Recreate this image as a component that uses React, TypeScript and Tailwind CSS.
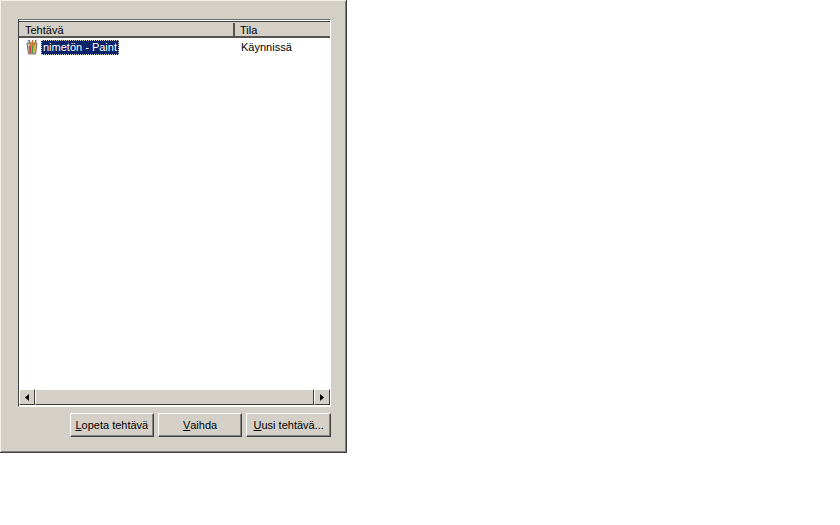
import React from "react";

const raised =
  "border border-t-white border-l-white border-r-[#404040] border-b-[#404040] bg-[#d4d0c8]";

function PaintIcon() {
  return (
    <svg width="16" height="16" viewBox="0 0 16 16" className="shrink-0">
      <path d="M3 4h10l-1.5 11h-7z" fill="#c8c4bc" stroke="#6e6a62" strokeWidth="1" />
      <path d="M5 7h2l.5 7H5.5z" fill="#d8413a" />
      <path d="M7.5 7h2l-.3 7H7.8z" fill="#3f9a45" />
      <path d="M9.8 7h1.7l-1 7H9.6z" fill="#e0b030" />
      <path d="M5 1l2 6M8.5 1v6M12 1l-2 6" stroke="#b5762e" strokeWidth="1.4" />
      <path d="M4 1l1.5 2M11 2l1.5-1" stroke="#4262b0" strokeWidth="1" />
    </svg>
  );
}

function ArrowButton({ dir }: { dir: "left" | "right" }) {
  return (
    <div className={`w-4 h-4 shrink-0 flex items-center justify-center ${raised}`}>
      <svg width="4" height="7" viewBox="0 0 4 7">
        <path d={dir === "left" ? "M4 0v7L0 3.5z" : "M0 0v7l4-3.5z"} fill="#000" />
      </svg>
    </div>
  );
}

function DialogButton({ hotkey, rest, width }: { hotkey: string; rest: string; width: string }) {
  return (
    <button
      className={`h-6 ${width} flex items-center justify-center text-[11px] text-black border border-t-white border-l-white border-r-[#404040] border-b-[#404040] bg-[#d4d0c8] shadow-[inset_-1px_-1px_0_#808080]`}
    >
      <span className="underline">{hotkey}</span>
      {rest}
    </button>
  );
}

export default function App() {
  return (
    <div className="w-[840px] h-[525px] bg-white font-['Liberation_Sans',sans-serif] text-[11px] text-black overflow-hidden">
      <div className="w-[347px] h-[453px] bg-[#d4d0c8] border-r border-b border-r-[#404040] border-b-[#404040] shadow-[inset_1px_1px_0_#f2f0ea,inset_-1px_-1px_0_#808080] pt-[19px] pl-[18px] pr-[15px] flex flex-col">
        {/* Task list */}
        <div className="h-[388px] w-[313px] flex flex-col border border-t-[#707070] border-l-[#404040] border-r-white border-b-white bg-white">
          <div className="h-[17px] mt-px flex shrink-0 bg-[#d4d0c8] border-t border-t-[#404040] border-b-2 border-b-[#55534e] leading-[15px] pt-px">
            <div className="w-[216px] pl-[6px] border-r-2 border-r-[#55534e]">Tehtävä</div>
            <div className="pl-[5px]">Tila</div>
          </div>
          <div className="flex-1 min-h-0 flex flex-col">
            <div className="h-4 mt-px flex items-center pl-[5px]">
              <PaintIcon />
              <span className="ml-px h-[15px] px-[2px] leading-[14px] bg-[#0a246a] text-white outline-1 outline-dotted outline-[#d4d0c8] -outline-offset-1 w-[78px]">
                nimetön - Paint
              </span>
              <span className="ml-[122px]">Käynnissä</span>
            </div>
          </div>
          <div className="h-4 mb-px flex items-stretch shrink-0">
            <ArrowButton dir="left" />
            <div className={`w-[260px] ${raised} ml-0 flex-1`} />
            <ArrowButton dir="right" />
          </div>
        </div>

        {/* Buttons */}
        <div className="mt-[6px] flex gap-[4px] pl-[52px]">
          <DialogButton hotkey="L" rest="opeta tehtävä" width="w-[84px]" />
          <DialogButton hotkey="V" rest="aihda" width="w-[85px]" />
          <DialogButton hotkey="U" rest="usi tehtävä..." width="w-[85px]" />
        </div>
      </div>
    </div>
  );
}
